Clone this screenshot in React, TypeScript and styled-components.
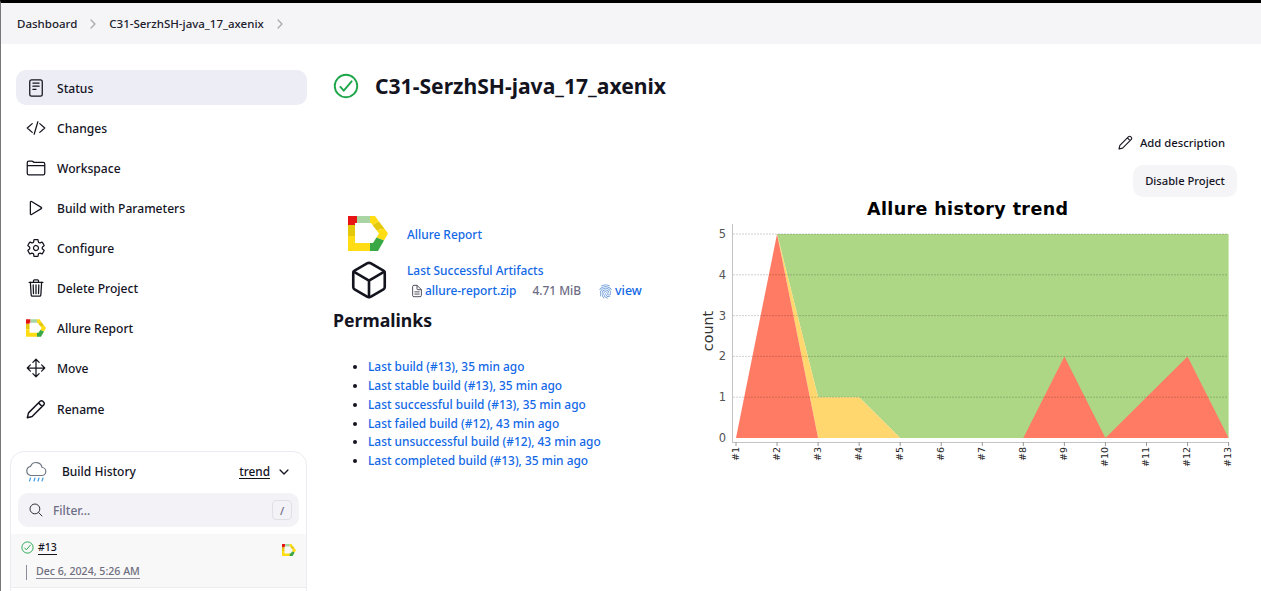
import React from "react";
import styled, { createGlobalStyle } from "styled-components";
import {
  IoReaderOutline,
  IoCodeSlashOutline,
  IoFolderOutline,
  IoPlayOutline,
  IoSettingsOutline,
  IoTrashOutline,
  IoMoveOutline,
  IoSearchOutline,
  IoChevronDown,
  IoChevronForward,
  IoCubeOutline,
  IoDocumentTextOutline,
  IoFingerPrintOutline,
  IoCheckmarkCircleOutline,
} from "react-icons/io5";

const GlobalStyle = createGlobalStyle`
  html, body {
    margin: 0;
    height: 100%;
    overflow: hidden;
    background: #fff;
  }
  body {
    font-family: "Noto Sans", "Open Sans", sans-serif;
    font-size: 12px;
    color: #14141f;
  }
`;

const Page = styled.div`
  height: 591px;
  overflow: hidden;
  border-top: 3px solid #000;
  border-left: 1px solid #777;
  box-sizing: border-box;
`;
const Breadcrumbs = styled.nav`
  height: 41px;
  background: #f5f5f7;
  display: flex;
  align-items: center;
  padding-left: 16px;
  font-weight: 500;
  font-size: 11.5px;
  color: #20202c;
`;
const Crumb = styled.span`
  white-space: nowrap;
`;
const CrumbArrow = styled(IoChevronForward)`
  color: #a8a8b0;
  font-size: 14px;
  margin: 0 9px 0 9px;
`;
const Body = styled.div`
  display: flex;
`;
const Sidebar = styled.aside`
  width: 332px;
  flex: none;
  box-sizing: border-box;
  padding: 26px 26px 0 9px;
`;
const SideNav = styled.div`
  display: flex;
  flex-direction: column;
  gap: 5px;
  margin: 0 0 25px 6px;
`;
const SideItem = styled.div<{ $active?: boolean }>`
  height: 35px;
  display: flex;
  align-items: center;
  gap: 11px;
  padding: 1px 0 0 10px;
  box-sizing: border-box;
  border-radius: 10px;
  font-weight: 500;
  font-size: 12.1px;
  background: ${(p) => (p.$active ? "#ededf5" : "transparent")};
  &:last-child {
    margin-top: 1px;
  }
  svg {
    width: 20px;
    height: 20px;
    flex: none;
    margin-top: -1px;
  }
`;
const HistoryCard = styled.section`
  border: 1px solid #ebebf1;
  border-radius: 14px 14px 0 0;
  height: 200px;
`;
const HistoryHead = styled.div`
  height: 39px;
  display: flex;
  align-items: center;
  padding: 0 15px 2px 14px;
  font-weight: 500;
  font-size: 12px;
`;
const HistoryTitle = styled.span`
  margin-left: 15px;
  flex: 1;
`;
const TrendLink = styled.span`
  border-bottom: 1px solid #14141f;
  line-height: 14px;
  font-size: 11.8px;
  margin-right: 7px;
`;
const FilterBox = styled.div`
  margin: 0 7px;
  height: 34px;
  border-radius: 10px;
  background: #f3f3f7;
  display: flex;
  align-items: center;
  padding: 0 7px 0 10px;
  gap: 9px;
  color: #6d6d85;
  font-weight: 500;
  font-size: 12px;
  svg {
    color: #333340;
    font-size: 16px;
  }
`;
const FilterText = styled.span`
  flex: 1;
`;
const Kbd = styled.span`
  width: 18px;
  height: 18px;
  border: 1px solid #dfdfe6;
  border-radius: 4px;
  display: flex;
  align-items: center;
  justify-content: center;
  font-size: 11px;
`;
const BuildRow = styled.div`
  margin-top: 7px;
  height: 53px;
  background: #f8f8f8;
  border-bottom: 1px solid #ededf1;
  display: grid;
  grid-template-columns: 1fr auto;
  padding: 0 10px 0 9px;
`;
const BuildMain = styled.div`
  display: flex;
  flex-direction: column;
`;
const BuildNumberLine = styled.div`
  display: flex;
  align-items: center;
  gap: 3px;
  height: 27px;
  svg {
    color: #1ea64b;
    font-size: 15px;
  }
`;
const BuildNumber = styled.span`
  font-size: 10.5px;
  font-weight: 500;
  line-height: 13px;
  border-bottom: 1px solid #14141f;
`;
const BuildDateLine = styled.div`
  display: flex;
  align-items: center;
  margin: 3px 0 0 6px;
  height: 16px;
`;
const DateRule = styled.span`
  width: 1px;
  height: 15px;
  background: #8b8b99;
  margin-right: 9px;
`;
const BuildDate = styled.span`
  font-size: 10.6px;
  line-height: 13px;
  color: #6d6d7d;
  font-weight: 500;
  border-bottom: 1px solid #8b8b99;
`;
const BuildBadge = styled.div`
  padding: 9px 0 0 1px;
`;
const Main = styled.main`
  flex: 1;
  padding: 26px 24px 0 0;
  min-width: 0;
`;
const TitleRow = styled.header`
  display: flex;
  align-items: center;
  height: 32px;
  gap: 14px;
  svg {
    color: #1ea64b;
    font-size: 30px;
    margin-left: -2px;
  }
`;
const Title = styled.h1`
  margin: 0 0 2px;
  font-size: 21.1px;
  font-weight: 700;
`;
const Actions = styled.div`
  display: flex;
  flex-direction: column;
  align-items: flex-end;
  margin-top: 26px;
  gap: 7px;
`;
const AddDescription = styled.div`
  height: 30px;
  display: flex;
  align-items: center;
  gap: 7px;
  padding: 0 12px 1px 0;
  box-sizing: border-box;
  font-weight: 500;
  font-size: 11.3px;
`;
const DisableButton = styled.div`
  width: 104px;
  height: 32px;
  padding-bottom: 1px;
  box-sizing: border-box;
  background: #f5f5f7;
  border-radius: 10px;
  display: flex;
  align-items: center;
  justify-content: center;
  font-weight: 500;
  font-size: 11.2px;
`;
const Content = styled.div`
  display: flex;
`;
const LeftColumn = styled.div`
  width: 367px;
  flex: none;
  padding-top: 19px;
`;
const ActionLine = styled.div`
  display: flex;
  align-items: center;
  height: 35px;
  padding-left: 15px;
  gap: 19px;
`;
const ArtifactLine = styled.div`
  display: flex;
  align-items: flex-start;
  padding: 9px 0 0 15px;
  gap: 17px;
  svg {
    font-size: 42px;
    margin-top: -1px;
    flex: none;
  }
`;
const Link = styled.span`
  color: #1268e6;
  font-weight: 500;
  font-size: 11.9px;
`;
const ArtifactInfo = styled.div`
  display: flex;
  flex-direction: column;
  gap: 3px;
  line-height: 17px;
  padding-top: 2px;
`;
const FileRow = styled.div`
  display: flex;
  align-items: center;
  margin-left: 3px;
`;
const FileIcon = styled(IoDocumentTextOutline)`
  font-size: 14px !important;
  color: #3a3a48;
  margin: 1px 1px 0 0 !important;
`;
const FileSize = styled.span`
  color: #6d6d85;
  font-size: 11.9px;
  font-weight: 500;
  margin: 0 17px 0 16px;
`;
const PrintIcon = styled(IoFingerPrintOutline)`
  font-size: 15px !important;
  color: #5f93d8;
  margin: 1px 2px 0 0 !important;
`;
const ViewLink = styled(Link)`
  font-size: 12.4px;
`;
const SectionTitle = styled.h2`
  margin: 7px 0 0;
  font-size: 17.7px;
  font-weight: 700;
  line-height: 25px;
`;
const PermaList = styled.ul`
  margin: 24px 0 0;
  padding: 0 0 0 35px;
  font-size: 11.9px;
  line-height: 18.85px;
`;
const ChartSvg = styled.svg`
  display: block;
  flex: none;
`;
const ChartTitle = styled.text`
  font-family: "DejaVu Sans", sans-serif;
  font-size: 17.5px;
  font-weight: 700;
  fill: #000;
`;
const TickLabel = styled.text`
  font-family: "DejaVu Sans", sans-serif;
  font-size: 11.5px;
  fill: #555;
`;
const BuildTick = styled.text`
  font-family: "DejaVu Sans", sans-serif;
  font-size: 9.5px;
  fill: #222;
`;
const AxisName = styled.text`
  font-family: "DejaVu Sans", sans-serif;
  font-size: 14.3px;
  fill: #333;
`;

const AllureLogo = ({ size }: { size: number }) => (
  <svg width={size} height={(size * 35) / 40} viewBox="0 0 40 35">
    <polygon points="0,9 7,9 7,20 0,20" fill="#e3c80c" />
    <polygon points="0,20 7,20 7,27 24,27 24,35 0,35" fill="#ffdc14" />
    <polygon points="0,0 9,0 9,7 7,7 7,9 0,9" fill="#e61414" />
    <polygon points="9,0 22,0 22,7 9,7" fill="#a9d5a4" />
    <polygon points="22,0 27,0 31,5.4 24.5,9 23,7 22,7" fill="#ffdc14" />
    <polygon points="31,5.4 36.5,12.8 28.5,14.2 24.5,9" fill="#e3c80c" />
    <polygon points="36.5,12.8 40,17.5 36,24.5 28.5,21.5 31,17.5 28.5,14.2" fill="#ffdc14" />
    <polygon points="36,24.5 30,35 22,35 22,27 25,27 28.5,21.5" fill="#3aa845" />
  </svg>
);

const PencilIcon = () => (
  <svg width="15" height="15" viewBox="0 0 15 15" fill="none">
    <path
      d="M1 14l.9-3.6L10.6 1.7a1.4 1.4 0 0 1 2 0l.7.7a1.4 1.4 0 0 1 0 2L4.6 13.1 1 14zM9.4 2.9l2.7 2.7"
      stroke="currentColor"
      strokeWidth="1.1"
      strokeLinejoin="round"
    />
  </svg>
);

const RainCloud = () => (
  <svg width="22" height="24" viewBox="0 0 22 24" fill="none">
    <path
      d="M5.5 15.5h11a4 4 0 0 0 .6-8A6 6 0 0 0 5.6 6.3 4.7 4.7 0 0 0 5.5 15.5z"
      stroke="#6f7784"
      strokeWidth="1.2"
    />
    <path
      d="M5.5 18l-1 3M10 18l-1 3M14 18l-1 3M18 18l-1 3"
      stroke="#3f9be0"
      strokeWidth="1.2"
      strokeLinecap="round"
    />
  </svg>
);

const X_START = 736;
const X_STEP = 41.05;
const Y_ZERO = 438;
const Y_STEP = 40.8;
const xAt = (build: number) => X_START + (build - 1) * X_STEP;
const yAt = (count: number) => Y_ZERO - count * Y_STEP;
const toPoints = (list: number[][]) =>
  list.map(([b, c]) => `${xAt(b)},${yAt(c)}`).join(" ");

const TrendChart = () => (
  <ChartSvg width="537" height="280" viewBox="700 197 537 280">
    <ChartTitle x="867" y="215" textLength="201">
      Allure history trend
    </ChartTitle>
    <polygon
      points={toPoints([[2, 5], [13, 5], [13, 0], [5, 0], [4, 1], [3, 1]])}
      fill="#add685"
    />
    <polygon
      points={toPoints([[2, 5], [3, 1], [4, 1], [5, 0], [3, 0]])}
      fill="#ffd76e"
    />
    <polygon points={toPoints([[1, 0], [2, 5], [3, 0]])} fill="#ff7b64" />
    <polygon points={toPoints([[8, 0], [9, 2], [10, 0]])} fill="#ff7b64" />
    <polygon points={toPoints([[10, 0], [12, 2], [13, 0]])} fill="#ff7b64" />
    {[0, 1, 2, 3, 4, 5].map((n) => (
      <g key={n}>
        {n > 0 && (
          <line
            x1="733"
            x2="1228"
            y1={yAt(n)}
            y2={yAt(n)}
            stroke="#000"
            strokeOpacity="0.18"
            strokeWidth="1"
            strokeDasharray="2 1"
          />
        )}
        <TickLabel x="726" y={yAt(n) + 4} textAnchor="end">
          {n}
        </TickLabel>
      </g>
    ))}
    <line x1="732.5" x2="732.5" y1="224" y2="442" stroke="#c4c4c4" />
    <line x1="732" x2="1229" y1="442.5" y2="442.5" stroke="#c4c4c4" />
    {Array.from({ length: 13 }, (_, i) => i + 1).map((b) => (
      <g key={b}>
        <line x1={xAt(b)} x2={xAt(b)} y1="442" y2="446" stroke="#999" />
        <BuildTick
          transform={`translate(${xAt(b) + 2.5} 447) rotate(-90)`}
          textAnchor="end"
        >
          #{b}
        </BuildTick>
      </g>
    ))}
    <AxisName
      transform="translate(712.5 331) rotate(-90)"
      textAnchor="middle"
    >
      count
    </AxisName>
  </ChartSvg>
);

const navItems = [
  { label: "Status", icon: <IoReaderOutline />, active: true },
  { label: "Changes", icon: <IoCodeSlashOutline /> },
  { label: "Workspace", icon: <IoFolderOutline /> },
  { label: "Build with Parameters", icon: <IoPlayOutline /> },
  { label: "Configure", icon: <IoSettingsOutline /> },
  { label: "Delete Project", icon: <IoTrashOutline /> },
  { label: "Allure Report", icon: <AllureLogo size={18} /> },
  { label: "Move", icon: <IoMoveOutline /> },
  { label: "Rename", icon: <PencilIcon /> },
];

const permalinks = [
  "Last build (#13), 35 min ago",
  "Last stable build (#13), 35 min ago",
  "Last successful build (#13), 35 min ago",
  "Last failed build (#12), 43 min ago",
  "Last unsuccessful build (#12), 43 min ago",
  "Last completed build (#13), 35 min ago",
];

const App = () => (
  <Page>
    <GlobalStyle />
    <Breadcrumbs>
      <Crumb>Dashboard</Crumb>
      <CrumbArrow />
      <Crumb>C31-SerzhSH-java_17_axenix</Crumb>
      <CrumbArrow />
    </Breadcrumbs>
    <Body>
      <Sidebar>
        <SideNav>
          {navItems.map((item) => (
            <SideItem key={item.label} $active={item.active}>
              {item.icon}
              {item.label}
            </SideItem>
          ))}
        </SideNav>
        <HistoryCard>
          <HistoryHead>
            <RainCloud />
            <HistoryTitle>Build History</HistoryTitle>
            <TrendLink>trend</TrendLink>
            <IoChevronDown size={14} />
          </HistoryHead>
          <FilterBox>
            <IoSearchOutline />
            <FilterText>Filter...</FilterText>
            <Kbd>/</Kbd>
          </FilterBox>
          <BuildRow>
            <BuildMain>
              <BuildNumberLine>
                <IoCheckmarkCircleOutline />
                <BuildNumber>#13</BuildNumber>
              </BuildNumberLine>
              <BuildDateLine>
                <DateRule />
                <BuildDate>Dec 6, 2024, 5:26 AM</BuildDate>
              </BuildDateLine>
            </BuildMain>
            <BuildBadge>
              <AllureLogo size={14} />
            </BuildBadge>
          </BuildRow>
        </HistoryCard>
      </Sidebar>
      <Main>
        <TitleRow>
          <IoCheckmarkCircleOutline />
          <Title>C31-SerzhSH-java_17_axenix</Title>
        </TitleRow>
        <Actions>
          <AddDescription>
            <PencilIcon />
            Add description
          </AddDescription>
          <DisableButton>Disable Project</DisableButton>
        </Actions>
        <Content>
          <LeftColumn>
            <ActionLine>
              <AllureLogo size={40} />
              <Link>Allure Report</Link>
            </ActionLine>
            <ArtifactLine>
              <IoCubeOutline />
              <ArtifactInfo>
                <Link>Last Successful Artifacts</Link>
                <FileRow>
                  <FileIcon />
                  <Link>allure-report.zip</Link>
                  <FileSize>4.71 MiB</FileSize>
                  <PrintIcon />
                  <ViewLink>view</ViewLink>
                </FileRow>
              </ArtifactInfo>
            </ArtifactLine>
            <SectionTitle>Permalinks</SectionTitle>
            <PermaList>
              {permalinks.map((text) => (
                <li key={text}>
                  <Link>{text}</Link>
                </li>
              ))}
            </PermaList>
          </LeftColumn>
          <TrendChart />
        </Content>
      </Main>
    </Body>
  </Page>
);

export default App;
